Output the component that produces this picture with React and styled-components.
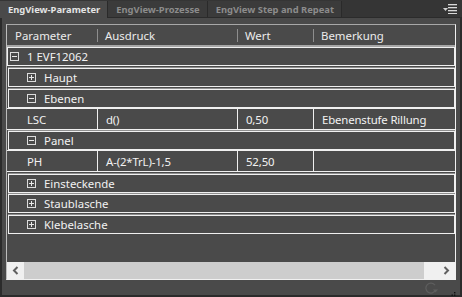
import React from 'react';
import styled, { createGlobalStyle } from 'styled-components';

const GlobalStyle = createGlobalStyle`
  html, body { margin: 0; padding: 0; background: #2b2b2b; }
  body { font-family: "Noto Sans", "Open Sans", sans-serif; }
`;

const COLS = '90px 140px 76px 1fr';

const Panel = styled.div`
  width: 462px;
  height: 297px;
  display: flex;
  flex-direction: column;
  background: #4a4a4a;
  overflow: hidden;
`;

const TabBar = styled.div`
  height: 18px;
  display: flex;
  align-items: stretch;
  background: #353535;
  box-sizing: border-box;
  padding-top: 1px;
  border-bottom: 1px solid #2b2b2b;
`;

const Tab = styled.div`
  display: flex;
  align-items: center;
  padding: 0 7px 0 8px;
  font-size: 9.4px;
  font-weight: 700;
  white-space: nowrap;
  color: ${p => (p.$active ? '#e4e4e4' : '#8c8c8c')};
  background: ${p => (p.$active ? '#4a4a4a' : '#3b3b3b')};
  border-right: 1px solid #2a2a2a;
  margin-bottom: ${p => (p.$active ? '-1px' : '0')};
`;

const Spacer = styled.div`
  flex: 1;
`;

const MenuButton = styled.div`
  width: 18px;
  display: flex;
  align-items: center;
  justify-content: center;
  margin-right: 3px;
`;

const Body = styled.div`
  flex: 1;
  display: flex;
  flex-direction: column;
  border: 2px solid #2b2b2b;
  border-top: none;
  padding: 6px 4px 0 4px;
  min-height: 0;
`;

const Table = styled.div`
  height: 256px;
  box-sizing: border-box;
  display: flex;
  flex-direction: column;
  border: 1px solid #bdbdbd;
  border-right-color: #f0f0f0;
  border-bottom-color: #f0f0f0;
  border-top-color: #a8a8a8;
`;

const HeaderRow = styled.div`
  height: 22px;
  box-sizing: border-box;
  display: grid;
  grid-template-columns: ${COLS};
  border-bottom: 2px solid #a6a6a6;
`;

const HeadCell = styled.div`
  position: relative;
  display: flex;
  align-items: center;
  padding-left: 8px;
  font-size: 11.4px;
  color: #ececec;
  white-space: nowrap;
  &::before {
    content: '';
    display: ${p => (p.$first ? 'none' : 'block')};
    position: absolute;
    left: 0;
    top: 4px;
    height: 13px;
    width: 1px;
    background: #8e8e8e;
  }
`;

const Rows = styled.div`
  flex: 1;
  display: flex;
  flex-direction: column;
`;

const GroupRow = styled.div`
  height: 19px;
  flex: none;
  box-sizing: border-box;
  display: flex;
  align-items: center;
  margin-top: ${p => p.$gap}px;
  margin-left: ${p => (p.$level ? 1 : 0)}px;
  padding-left: ${p => 2 + p.$level * 16}px;
  border: 1px solid #f0f0f0;
  box-shadow: 0 -1px 0 ${p => (p.$gap ? '#8f8f8f' : 'transparent')};
  font-size: 11.4px;
  color: #f2f2f2;
  white-space: nowrap;
`;

const Toggle = styled.span`
  width: 9px;
  height: 9px;
  box-sizing: border-box;
  border: 1px solid #dcdcdc;
  margin-right: 8px;
  position: relative;
  flex: none;
  &::before {
    content: '';
    position: absolute;
    left: 1px;
    top: 3px;
    width: 5px;
    height: 1px;
    background: #e8e8e8;
  }
  &::after {
    content: '';
    display: ${p => (p.$open ? 'none' : 'block')};
    position: absolute;
    left: 3px;
    top: 1px;
    width: 1px;
    height: 5px;
    background: #e8e8e8;
  }
`;

const DataRow = styled.div`
  height: 22px;
  flex: none;
  box-sizing: border-box;
  display: grid;
  grid-template-columns: ${COLS};
  border-top: 1px solid #f0f0f0;
  border-bottom: 1px solid #f0f0f0;
`;

const Cell = styled.div`
  display: flex;
  align-items: center;
  padding-left: ${p => (p.$first ? 20 : 8)}px;
  border-left: ${p => (p.$first ? 'none' : '1px solid #f0f0f0')};
  font-size: 11.4px;
  letter-spacing: -0.15px;
  color: #f2f2f2;
  white-space: nowrap;
`;

const ScrollBar = styled.div`
  height: 17px;
  flex: none;
  display: flex;
  background: #f0f0f0;
`;

const ScrollButton = styled.div`
  width: 17px;
  display: flex;
  align-items: center;
  justify-content: center;
`;

const Thumb = styled.div`
  width: 400px;
  background: #cdcdcd;
`;

const StatusBar = styled.div`
  flex: 1;
  display: flex;
  align-items: center;
  justify-content: flex-end;
  gap: 9px;
`;

const Grip = styled.div`
  align-self: flex-end;
  width: 8px;
  height: 10px;
  margin-bottom: 1px;
`;

const Chevron = ({ dir }) => (
  <svg width="7" height="9" viewBox="0 0 7 9">
    <polyline
      points={dir === 'left' ? '5.5,1 2,4.5 5.5,8' : '1.5,1 5,4.5 1.5,8'}
      fill="none"
      stroke="#606060"
      strokeWidth="2"
    />
  </svg>
);

const rows = [
  { type: 'group', level: 0, open: true, label: '1 EVF12062', gap: 0 },
  { type: 'group', level: 1, open: false, label: 'Haupt', gap: 2 },
  { type: 'group', level: 1, open: true, label: 'Ebenen', gap: 2 },
  { type: 'data', cells: ['LSC', 'd()', '0,50', 'Ebenenstufe Rillung'] },
  { type: 'group', level: 1, open: true, label: 'Panel', gap: 1 },
  { type: 'data', cells: ['PH', 'A-(2*TrL)-1,5', '52,50', ''] },
  { type: 'group', level: 1, open: false, label: 'Einsteckende', gap: 2 },
  { type: 'group', level: 1, open: false, label: 'Staublasche', gap: 1 },
  { type: 'group', level: 1, open: false, label: 'Klebelasche', gap: 2 },
];

export default function App() {
  return (
    <>
      <GlobalStyle />
      <Panel>
        <TabBar>
          <Tab $active>EngView-Parameter</Tab>
          <Tab>EngView-Prozesse</Tab>
          <Tab>EngView Step and Repeat</Tab>
          <Spacer />
          <MenuButton>
            <svg width="14" height="10" viewBox="0 0 14 10">
              <polygon points="0,4 5,4 2.5,7" fill="#d0d0d0" />
              <rect x="5" y="0" width="9" height="1.3" fill="#d8d8d8" />
              <rect x="5" y="3" width="9" height="1.3" fill="#d8d8d8" />
              <rect x="5" y="6" width="9" height="1.3" fill="#d8d8d8" />
              <rect x="5" y="9" width="9" height="1" fill="#d8d8d8" />
            </svg>
          </MenuButton>
        </TabBar>
        <Body>
          <Table>
            <HeaderRow>
              <HeadCell $first>Parameter</HeadCell>
              <HeadCell>Ausdruck</HeadCell>
              <HeadCell>Wert</HeadCell>
              <HeadCell>Bemerkung</HeadCell>
            </HeaderRow>
            <Rows>
              {rows.map((r, i) =>
                r.type === 'group' ? (
                  <GroupRow key={i} $level={r.level} $gap={r.gap}>
                    <Toggle $open={r.open} />
                    {r.label}
                  </GroupRow>
                ) : (
                  <DataRow key={i}>
                    {r.cells.map((c, j) => (
                      <Cell key={j} $first={j === 0}>{c}</Cell>
                    ))}
                  </DataRow>
                )
              )}
            </Rows>
            <ScrollBar>
              <ScrollButton><Chevron dir="left" /></ScrollButton>
              <Thumb />
              <Spacer />
              <ScrollButton><Chevron dir="right" /></ScrollButton>
            </ScrollBar>
          </Table>
          <StatusBar>
            <svg width="14" height="12" viewBox="0 0 14 12">
              <path d="M10 3.2 A5 5 0 1 0 10.5 8" fill="none" stroke="#5e5e5e" strokeWidth="1.2" />
              <polygon points="8,7.5 13,7.5 10.5,10.5" fill="#5e5e5e" />
            </svg>
            <Grip>
              <svg width="8" height="10" viewBox="0 0 8 10">
                {[[6, 1], [6, 3.5], [3.5, 3.5], [6, 6], [3.5, 6], [1, 6], [6, 8.5], [3.5, 8.5], [1, 8.5]].map(([x, y], k) => (
                  <rect key={k} x={x} y={y} width="1.4" height="1.4" fill="#111" />
                ))}
              </svg>
            </Grip>
          </StatusBar>
        </Body>
      </Panel>
    </>
  );
}
